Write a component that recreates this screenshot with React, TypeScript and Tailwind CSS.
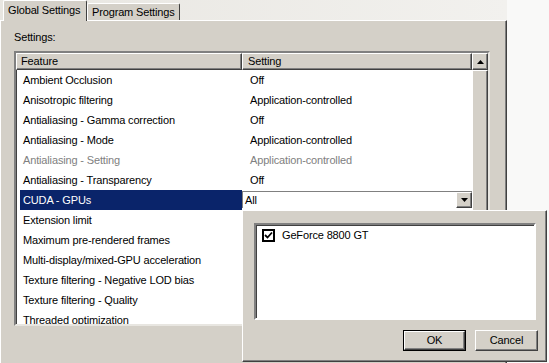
import React from "react";

const rows: { feature: string; value: string; disabled?: boolean; selected?: boolean }[] = [
  { feature: "Ambient Occlusion", value: "Off" },
  { feature: "Anisotropic filtering", value: "Application-controlled" },
  { feature: "Antialiasing - Gamma correction", value: "Off" },
  { feature: "Antialiasing - Mode", value: "Application-controlled" },
  { feature: "Antialiasing - Setting", value: "Application-controlled", disabled: true },
  { feature: "Antialiasing - Transparency", value: "Off" },
  { feature: "CUDA - GPUs", value: "All", selected: true },
  { feature: "Extension limit", value: "" },
  { feature: "Maximum pre-rendered frames", value: "" },
  { feature: "Multi-display/mixed-GPU acceleration", value: "" },
  { feature: "Texture filtering - Negative LOD bias", value: "" },
  { feature: "Texture filtering - Quality", value: "" },
  { feature: "Threaded optimization", value: "" },
];

function Raised({ className = "", children }: { className?: string; children?: React.ReactNode }) {
  return (
    <div
      className={
        "bg-[#D4D0C8] border-t border-l border-r border-b border-t-white border-l-white border-r-[#404040] border-b-[#404040] shadow-[inset_-1px_-1px_0_#808080] " +
        className
      }
    >
      {children}
    </div>
  );
}

function Combo() {
  return (
    <div className="mt-[1px] flex h-[17px] w-[230px] self-start border-t border-l border-t-[#808080] border-l-[#808080] bg-white">
      <div className="flex flex-1 items-center pl-[2px] text-black">All</div>
      <Raised className="flex h-[16px] w-[16px] items-center justify-center">
        <svg width="7" height="4" viewBox="0 0 7 4">
          <path d="M0 0h7L3.5 4z" fill="#000" />
        </svg>
      </Raised>
    </div>
  );
}

export default function App() {
  return (
    <div
      className="relative flex h-[363px] w-[549px] overflow-hidden bg-[#F9F9F8] text-[11px] leading-[13px] tracking-[-0.15px] text-black"
      style={{ fontFamily: '"Liberation Sans", Arial, sans-serif' }}
    >
      <div className="flex w-[507px] flex-col">
        {/* tab strip */}
        <div className="flex h-[20px] items-end bg-gradient-to-r from-[#E8E6E1] to-[#F2F1EE] pl-[3px]">
          <div className="relative z-10 -mb-[1px] flex h-[21px] w-[84px] items-start rounded-t-[2px] border-t border-l border-r border-t-white border-l-white border-r-[#404040] bg-[#D4D0C8] pl-[4px] pt-[3px]">
            Global Settings
          </div>
          <div className="flex h-[17px] w-[93px] items-start rounded-t-[2px] border-t border-l border-r border-t-white border-l-white border-r-[#404040] bg-[#D4D0C8] pl-[4px] pt-[2px]">
            Program Settings
          </div>
        </div>

        {/* panel */}
        <div className="flex flex-1 flex-col border-t border-l border-r border-t-white border-l-white border-r-[#404040] bg-[#D4D0C8] pl-[13px] pt-[10px] shadow-[inset_-1px_0_0_#808080]">
          <div className="mb-[7px]">Settings:</div>

          <div className="flex h-[275px] w-[476px] border-2 border-t-[#808080] border-l-[#808080] border-r-[#E8E6E1] border-b-[#E8E6E1] bg-white shadow-[inset_1px_1px_0_#404040]">
            <div className="flex w-[456px] flex-col overflow-hidden">
              {/* header */}
              <div className="flex h-[17px] shrink-0">
                <Raised className="flex w-[226px] items-center pl-[4px]">Feature</Raised>
                <Raised className="flex w-[230px] items-center pl-[5px]">Setting</Raised>
              </div>
              {rows.map((r) => (
                <div key={r.feature} className="flex h-[20px] shrink-0">
                  <div className="flex w-[226px] pl-[4px]">
                    <div
                      className={
                        "flex flex-1 items-center pl-[3px] " +
                        (r.selected ? "bg-[#0A246A] text-white" : r.disabled ? "text-[#808080]" : "")
                      }
                    >
                      {r.feature}
                    </div>
                  </div>
                  {r.selected ? (
                    <Combo />
                  ) : (
                    <div className={"flex w-[230px] items-center pl-[8px] " + (r.disabled ? "text-[#808080]" : "")}>
                      {r.value}
                    </div>
                  )}
                </div>
              ))}
            </div>
            {/* scrollbar */}
            <div className="flex w-[16px] flex-col bg-[#E8E6E1]">
              <Raised className="flex h-[17px] items-center justify-center">
                <svg width="7" height="4" viewBox="0 0 7 4">
                  <path d="M3.5 0L7 4H0z" fill="#000" />
                </svg>
              </Raised>
              <Raised className="h-[200px]" />
            </div>
          </div>
        </div>
      </div>

      {/* dropdown popup */}
      <div className="absolute left-[242px] top-[210px] flex h-[152px] w-[305px] flex-col border-t border-l border-r border-b border-t-white border-l-white border-r-[#404040] border-b-[#404040] bg-[#D4D0C8] shadow-[inset_-1px_-1px_0_#808080]">
        <div className="ml-[11px] mt-[12px] h-[97px] w-[282px] border-2 border-t-[#808080] border-l-[#808080] border-r-white border-b-white bg-white pl-[6px] pt-[2px] shadow-[inset_1px_1px_0_#404040]">
          <div className="flex h-[16px] items-center gap-[7px]">
            <div className="flex h-[13px] w-[13px] items-center justify-center border-2 border-black bg-white">
              <svg width="9" height="9" viewBox="0 0 9 9">
                <path d="M1 4l2.5 2.5L8 1.5" stroke="#000" strokeWidth="1.8" fill="none" />
              </svg>
            </div>
            <span>GeForce 8800 GT</span>
          </div>
        </div>
        <div className="mt-[10px] flex justify-end gap-[9px] pr-[8px]">
          <div className="border border-black">
            <Raised className="flex h-[19px] w-[61px] items-center justify-center">OK</Raised>
          </div>
          <Raised className="flex h-[21px] w-[63px] items-center justify-center">Cancel</Raised>
        </div>
      </div>
    </div>
  );
}
